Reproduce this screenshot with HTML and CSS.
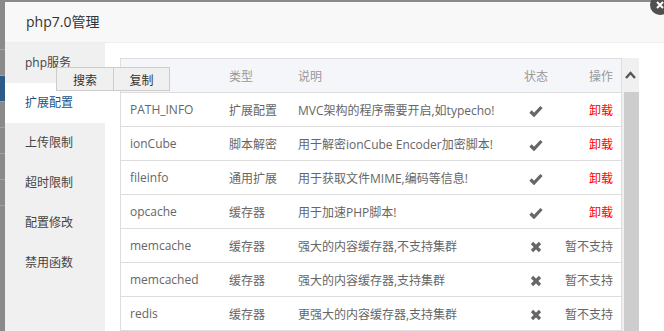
FILE: index.html
```html
<!DOCTYPE html>
<html lang="zh-CN">
  <head>
    <meta charset="UTF-8" />
    <meta name="viewport" content="width=device-width, initial-scale=1.0" />
    <title>php7.0管理</title>
    <link rel="stylesheet" href="styles.css">
  </head>
  <body>
    <div class="shade">
      <div class="shade-row"></div>
      <div class="shade-row"></div>
      <div class="shade-row on"></div>
      <div class="shade-row"></div>
      <div class="shade-row"></div>
      <div class="shade-row"></div>
      <div class="shade-row"></div>
    </div>
    <div class="layer">
      <div class="layer-title">php7.0管理</div>
      <span class="layer-close">
        <svg width="10" height="10" viewBox="0 0 10 10"><path d="M2 2 L8 8 M8 2 L2 8" stroke="#fff" stroke-width="2"/></svg>
      </span>
      <div class="layer-body">
        <ul class="menu">
          <li>php服务</li>
          <li class="active">扩展配置</li>
          <li>上传限制</li>
          <li>超时限制</li>
          <li>配置修改</li>
          <li>禁用函数</li>
        </ul>
        <div class="content">
          <div class="scroll-box">
            <table class="ext-table">
              <thead>
                <tr>
                  <th class="c-name"></th>
                  <th class="c-type">类型</th>
                  <th class="c-info">说明</th>
                  <th class="c-state">状态</th>
                  <th class="c-op">操作</th>
                </tr>
              </thead>
              <tbody id="rows"></tbody>
            </table>
            <div class="scrollbar">
              <div class="scroll-up">
                <svg width="11" height="8" viewBox="0 0 11 8"><path d="M1 7 L5.5 2 L10 7" fill="none" stroke="#555" stroke-width="2.4"/></svg>
              </div>
              <div class="scroll-thumb"></div>
            </div>
          </div>
        </div>
      </div>
      <div class="ctx-menu">
        <button>搜索</button>
        <button>复制</button>
      </div>
    </div>

    <script>
      const list = [
        ["PATH_INFO", "扩展配置", "MVC架构的程序需要开启,如typecho!", true],
        ["ionCube", "脚本解密", "用于解密ionCube Encoder加密脚本!", true],
        ["fileinfo", "通用扩展", "用于获取文件MIME,编码等信息!", true],
        ["opcache", "缓存器", "用于加速PHP脚本!", true],
        ["memcache", "缓存器", "强大的内容缓存器,不支持集群", false],
        ["memcached", "缓存器", "强大的内容缓存器,支持集群", false],
        ["redis", "缓存器", "更强大的内容缓存器,支持集群", false],
      ];
      const okIcon = '<svg width="14" height="12" viewBox="0 0 14 12"><path d="M1.5 6.5 L5 10 L12.5 2" fill="none" stroke="#666" stroke-width="3.2"/></svg>';
      const noIcon = '<svg width="12" height="12" viewBox="0 0 12 12"><path d="M2 2 L10 10 M10 2 L2 10" stroke="#666" stroke-width="3.2"/></svg>';
      const $rows = document.querySelector("#rows");
      let html = "";
      for (const [name, type, info, on] of list) {
        html += `<tr><td>${name}</td><td>${type}</td><td>${info}</td>` +
          `<td class="c-state">${on ? okIcon : noIcon}</td>` +
          `<td class="c-op">${on ? '<a class="btn-del">卸载</a>' : "暂不支持"}</td></tr>`;
      }
      $rows.innerHTML = html;
    </script>
  </body>
</html>
```

FILE: styles.css
```css
html,
body {
  margin: 0;
  height: 100%;
  overflow: hidden;
}
body {
  display: flex;
  background-color: #8a8a8a;
  font-family: "Open Sans", "Noto Sans CJK SC", sans-serif;
  color: #666;
}
.shade {
  width: 5px;
  flex-shrink: 0;
  padding-top: 24px;
}
.shade-row {
  height: 25px;
  border-bottom: 1px solid #a0a0a0;
}
.shade-row.on {
  background-color: #2d5a86;
}
.layer {
  position: relative;
  flex: 1;
  margin-top: 2px;
  background-color: #fff;
  display: flex;
  flex-direction: column;
}
.layer-title {
  height: 40px;
  line-height: 40px;
  padding-left: 21px;
  font-size: 14px;
  color: #333;
  background-color: #f8f8f8;
  border-bottom: 1px solid #eee;
}
.layer-close {
  position: absolute;
  top: -7px;
  right: -6px;
  width: 20px;
  height: 20px;
  border-radius: 50%;
  background-color: #505050;
  display: flex;
  align-items: center;
  justify-content: center;
}
.layer-body {
  flex: 1;
  display: flex;
}
.menu {
  width: 100px;
  margin: 0;
  padding: 0;
  list-style: none;
  background-color: #f0f0f0;
}
.menu li {
  height: 40px;
  line-height: 40px;
  padding-left: 20px;
  font-size: 12px;
  color: #444;
}
.menu li.active {
  background-color: #fff;
  color: #20558b;
}
.content {
  flex: 1;
  padding: 15px 25px 0 15px;
}
.scroll-box {
  display: flex;
  height: 100%;
}
.ext-table {
  width: 502px;
  border-collapse: collapse;
  font-size: 12px;
  table-layout: fixed;
  align-self: flex-start;
}
.ext-table th,
.ext-table td {
  height: 33px;
  padding: 0 0 0 9px;
  text-align: left;
  white-space: nowrap;
  border-top: 1px solid #ddd;
  border-bottom: 1px solid #ddd;
}
.ext-table th {
  font-weight: normal;
  color: #999;
  background-color: #f5f6fa;
}
.ext-table tr > :first-child {
  border-left: 1px solid #ddd;
}
.ext-table tr > :last-child {
  border-right: 1px solid #ddd;
}
.c-name {
  width: 90px;
}
.c-type {
  width: 60px;
}
.c-info {
  width: 214px;
}
.ext-table .c-state {
  width: 48px;
  padding: 0;
  text-align: center;
}
.ext-table .c-op {
  text-align: right;
  padding: 0 8px 0 0;
}
.ext-table svg {
  vertical-align: middle;
}
.btn-del {
  color: #f00;
}
.scrollbar {
  width: 17px;
  background-color: #f0f0f0;
  display: flex;
  flex-direction: column;
}
.scroll-up {
  height: 34px;
  display: flex;
  align-items: center;
  justify-content: center;
}
.scroll-thumb {
  flex: 1;
  margin-left: 2px;
  background-color: #cdcdcd;
}
.ctx-menu {
  position: absolute;
  left: 51px;
  top: 65px;
  display: flex;
  background-color: #f0f0f0;
  border: 1px solid #ccc;
}
.ctx-menu button {
  width: 56px;
  height: 22px;
  padding: 0;
  font-family: "Noto Sans CJK SC", sans-serif;
  font-size: 12px;
  color: #333;
  background-color: #f0f0f0;
  border: none;
}
.ctx-menu button + button {
  border-left: 1px solid #ccc;
}
```
